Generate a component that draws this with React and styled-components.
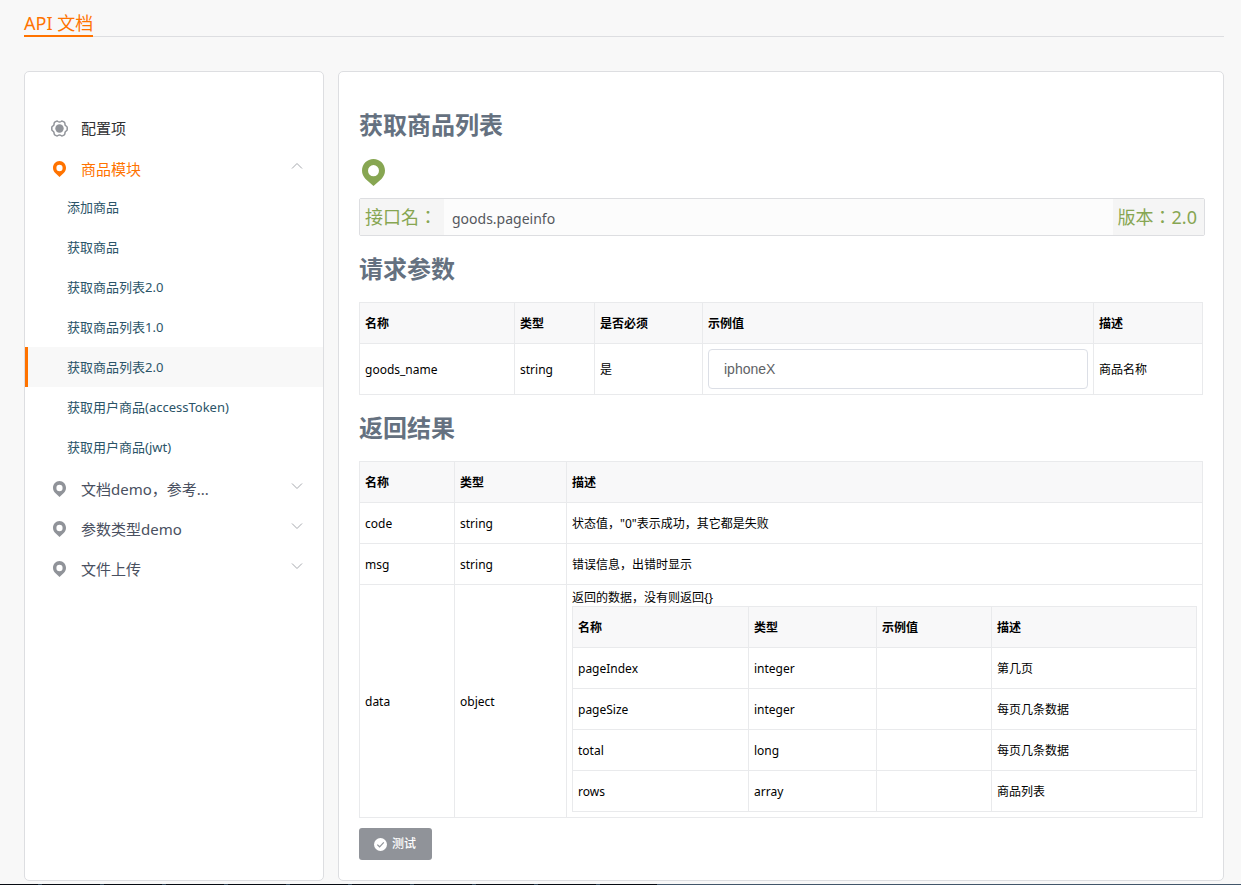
import React from "react";
import styled, { createGlobalStyle } from "styled-components";

const GlobalStyle = createGlobalStyle`
  *, *::before, *::after { box-sizing: border-box; }
  body {
    margin: 0;
    background: #f8f8f8;
    color: #000;
    font-family: "Noto Sans", "Noto Sans CJK SC", sans-serif;
    font-size: 12px;
    line-height: 16px;
  }
  button, input { font-family: inherit; }
`;

const Page = styled.div`
  padding: 0 17px 0 24px;
`;

const Header = styled.header`
  display: flex;
  height: 37px;
  margin-bottom: 34px;
  background: linear-gradient(#dddee1, #dddee1) left 36px / 100% 1px no-repeat;
`;

const Brand = styled.h1`
  margin: 0;
  padding-top: 11px;
  border-bottom: 2px solid #ff7300;
  color: #ff7300;
  font-size: 18px;
  line-height: 24px;
  font-weight: 400;
`;

const Columns = styled.div`
  display: grid;
  grid-template-columns: 300px minmax(0, 1fr);
  gap: 14px;
`;

const card = `
  background: #fff;
  border: 1px solid #dddee1;
  border-radius: 5px;
`;

const Sidebar = styled.nav`
  ${card}
  padding-top: 35px;
`;

const MenuList = styled.ul`
  margin: 0;
  padding: 0;
  list-style: none;
`;

const GroupButton = styled.button`
  display: flex;
  align-items: center;
  width: 100%;
  height: 40px;
  padding: ${(p) => (p.$dark ? "2px" : "4px")} 20px 0 26px;
  border: 0;
  background: none;
  color: ${(p) => (p.$active ? "#ff7300" : p.$dark ? "#303133" : "#495060")};
  font-size: 15px;
  line-height: 20px;
  text-align: left;
  cursor: pointer;
`;

const MenuIcon = styled.span`
  display: flex;
  justify-content: center;
  width: 17px;
  margin-right: 13px;
  color: ${(p) => (p.$active ? "#ff7300" : "#909399")};
`;

const Label = styled.span`
  flex: 1;
`;

const Arrow = styled.svg`
  align-self: flex-start;
  width: 12px;
  height: 12px;
  margin-top: 9px;
  fill: none;
  stroke: #a6a9ae;
  transform: ${(p) => (p.$open ? "none" : "rotate(180deg)")};
`;

const SubLink = styled.a`
  display: block;
  height: 40px;
  padding-left: 39px;
  border-left: 3px solid ${(p) => (p.$current ? "#ff7300" : "transparent")};
  background: ${(p) => (p.$current ? "#f8f8f8" : "transparent")};
  color: #2b5468;
  font-size: 13px;
  line-height: 40px;
  text-decoration: none;
`;

const Main = styled.main`
  ${card}
  padding: 40px 20px 20px;
`;

const Heading = styled.h2`
  margin: ${(p) => (p.$first ? "0" : "20px")} 0 20px;
  color: #657180;
  font-size: 24px;
  line-height: 26px;
  font-weight: 700;
`;

const Marker = styled.div`
  display: flex;
  width: 29px;
  height: 30px;
  margin-bottom: 10px;
  padding-top: 1px;
  align-items: flex-start;
  justify-content: center;
  color: #87a652;
`;

const ApiBar = styled.div`
  display: flex;
  height: 38px;
  margin-right: -2px;
  border: 1px solid #dddee1;
  border-radius: 2px;
  background: #fcfcfc;
  line-height: 36px;
`;

const ApiTag = styled.span`
  padding: 0 7px 0 5px;
  background: #f5f5f5;
  color: #87a652;
  font-family: "Noto Sans", "Noto Sans CJK TC", sans-serif;
  font-size: 18px;
`;

const ApiName = styled.span`
  flex: 1;
  padding: 2px 8px 0;
  color: #55585e;
  font-size: 14px;
`;

const Table = styled.table`
  width: 100%;
  table-layout: fixed;
  border-collapse: separate;
  border-spacing: 0;
  border: 1px solid #e9eaec;
  border-width: 1px 0 0 1px;
`;

const Col = styled.col`
  width: ${(p) => (p.$w ? `${p.$w}px` : "auto")};
`;

const Th = styled.th`
  height: 41px;
  padding: 2px 5px 0;
  border: 1px solid #e9eaec;
  border-width: 0 1px 1px 0;
  background: #f8f8f9;
  font-weight: 700;
  text-align: left;
`;

const Td = styled.td`
  height: 41px;
  padding: ${(p) => (p.$text ? "2px 5px 0" : "5px")};
  border: 1px solid #e9eaec;
  border-width: 0 1px 1px 0;
`;

const TextInput = styled.input`
  display: block;
  width: 100%;
  height: 40px;
  padding: 0 15px;
  border: 1px solid #dcdfe6;
  border-radius: 4px;
  background: #fff;
  color: #606266;
  font-family: "Liberation Sans", Arial, sans-serif;
  font-size: 14px;
`;

const TestButton = styled.button`
  display: flex;
  align-items: center;
  gap: 5px;
  height: 32px;
  margin-top: 10px;
  padding: 0 16px 0 15px;
  border: 0;
  border-radius: 3px;
  background: #909399;
  color: #fff;
  font-size: 12px;
  line-height: 16px;
  font-weight: 500;
  cursor: pointer;
`;

const BottomStrip = styled.footer`
  height: 1px;
  margin-top: 3px;
  background:
    linear-gradient(#42566a, #42566a) 657px 0 / 100% 1px no-repeat,
    repeating-linear-gradient(90deg, #070b12 0 38px, #2e4356 38px 42px, #070b12 42px 62px);
`;

const Pin = ({ width, height }) => (
  <svg width={width} height={height} viewBox="0 0 26 30" preserveAspectRatio="none" aria-hidden="true">
    <path
      fill="currentColor"
      fillRule="evenodd"
      d="M13 0C5.8 0 0 5.7 0 12.8c0 3.7 1.5 6.8 4 9.4L13 30l9-7.8c2.5-2.6 4-5.7 4-9.4C26 5.7 20.2 0 13 0Zm0 6.8a6.2 6.2 0 1 1 0 12.4 6.2 6.2 0 0 1 0-12.4Z"
    />
  </svg>
);

const Gear = () => (
  <svg width="17" height="17" viewBox="0 0 17 17" aria-hidden="true">
    <path
      d="M5.2 1.3 Q6.2 .8 6.9 1.5 Q8.5 2.6 10.1 1.5 Q10.8 .8 11.8 1.3 L13.3 2.2 Q14 2.8 13.9 3.7 Q13.8 5.4 15.3 6.2 Q16.2 6.7 16.2 7.6 V9.4 Q16.2 10.3 15.3 10.8 Q13.8 11.6 13.9 13.3 Q14 14.2 13.3 14.8 L11.8 15.7 Q10.8 16.2 10.1 15.5 Q8.5 14.4 6.9 15.5 Q6.2 16.2 5.2 15.7 L3.7 14.8 Q3 14.2 3.1 13.3 Q3.2 11.6 1.7 10.8 Q.8 10.3 .8 9.4 V7.6 Q.8 6.7 1.7 6.2 Q3.2 5.4 3.1 3.7 Q3 2.8 3.7 2.2 Z"
      fill="none"
      stroke="currentColor"
      strokeWidth="1.5"
    />
    <circle cx="8.5" cy="8.5" r="4.2" fill="currentColor" />
  </svg>
);

const Chevron = ({ open }) => (
  <Arrow viewBox="0 0 12 12" $open={open} aria-hidden="true">
    <path d="M1 8.5 6 3.5l5 5" />
  </Arrow>
);

const CheckDisc = () => (
  <svg width="13" height="13" viewBox="0 0 13 13" aria-hidden="true">
    <circle cx="6.5" cy="6.5" r="6.5" fill="#fff" />
    <path d="m3.3 6.6 2.3 2.2 4.2-4.4" fill="none" stroke="#909399" strokeWidth="1.2" />
  </svg>
);

const goodsLinks = [
  "添加商品",
  "获取商品",
  "获取商品列表2.0",
  "获取商品列表1.0",
  "获取商品列表2.0",
  "获取用户商品(accessToken)",
  "获取用户商品(jwt)",
];
const currentLink = 4;

const closedGroups = ["文档demo，参考...", "参数类型demo", "文件上传"];

const resultRows = [
  ["code", "string", '状态值，"0"表示成功，其它都是失败'],
  ["msg", "string", "错误信息，出错时显示"],
];

const dataRows = [
  ["pageIndex", "integer", "", "第几页"],
  ["pageSize", "integer", "", "每页几条数据"],
  ["total", "long", "", "每页几条数据"],
  ["rows", "array", "", "商品列表"],
];

function DataTable({ widths, heads, label, children }) {
  return (
    <Table aria-label={label}>
      <colgroup>
        {widths.map((w, i) => (
          <Col key={i} $w={w} />
        ))}
      </colgroup>
      <thead>
        <tr>
          {heads.map((h) => (
            <Th key={h} scope="col">{h}</Th>
          ))}
        </tr>
      </thead>
      <tbody>{children}</tbody>
    </Table>
  );
}

const Row = ({ cells }) => (
  <tr>
    {cells.map((c, i) => (
      <Td key={i} $text={typeof c === "string"}>{c}</Td>
    ))}
  </tr>
);

export default function App() {
  return (
    <>
      <GlobalStyle />
      <Page>
        <Header>
          <Brand>API 文档</Brand>
        </Header>
        <Columns>
          <Sidebar>
            <MenuList>
              <li>
                <GroupButton type="button" $dark>
                  <MenuIcon><Gear /></MenuIcon>
                  <Label>配置项</Label>
                </GroupButton>
              </li>
              <li>
                <GroupButton type="button" $active aria-expanded="true">
                  <MenuIcon $active><Pin width={13} height={16} /></MenuIcon>
                  <Label>商品模块</Label>
                  <Chevron open />
                </GroupButton>
                <MenuList>
                  {goodsLinks.map((text, i) => (
                    <li key={i}>
                      <SubLink href="#" $current={i === currentLink}>{text}</SubLink>
                    </li>
                  ))}
                </MenuList>
              </li>
              {closedGroups.map((text) => (
                <li key={text}>
                  <GroupButton type="button" aria-expanded="false">
                    <MenuIcon><Pin width={13} height={16} /></MenuIcon>
                    <Label>{text}</Label>
                    <Chevron />
                  </GroupButton>
                </li>
              ))}
            </MenuList>
          </Sidebar>
          <Main>
            <Heading $first>获取商品列表</Heading>
            <Marker><Pin width={23} height={27} /></Marker>
            <ApiBar>
              <ApiTag>接口名：</ApiTag>
              <ApiName>goods.pageinfo</ApiName>
              <ApiTag>版本：2.0</ApiTag>
            </ApiBar>
            <Heading>请求参数</Heading>
            <DataTable
              label="请求参数"
              widths={[155, 80, 108, 0, 109]}
              heads={["名称", "类型", "是否必须", "示例值", "描述"]}
            >
              <Row
                cells={[
                  "goods_name",
                  "string",
                  "是",
                  <TextInput key="value" aria-label="goods_name" defaultValue="iphoneX" />,
                  "商品名称",
                ]}
              />
            </DataTable>
            <Heading>返回结果</Heading>
            <DataTable label="返回结果" widths={[95, 112, 0]} heads={["名称", "类型", "描述"]}>
              {resultRows.map((cells) => (
                <Row key={cells[0]} cells={cells} />
              ))}
              <Row
                cells={[
                  "data",
                  "object",
                  <React.Fragment key="nested">
                    返回的数据，没有则返回{"{}"}
                    <DataTable
                      label="data"
                      widths={[176, 128, 115, 0]}
                      heads={["名称", "类型", "示例值", "描述"]}
                    >
                      {dataRows.map((row) => (
                        <Row key={row[0]} cells={row} />
                      ))}
                    </DataTable>
                  </React.Fragment>,
                ]}
              />
            </DataTable>
            <TestButton type="button">
              <CheckDisc />
              测试
            </TestButton>
          </Main>
        </Columns>
      </Page>
      <BottomStrip />
    </>
  );
}
